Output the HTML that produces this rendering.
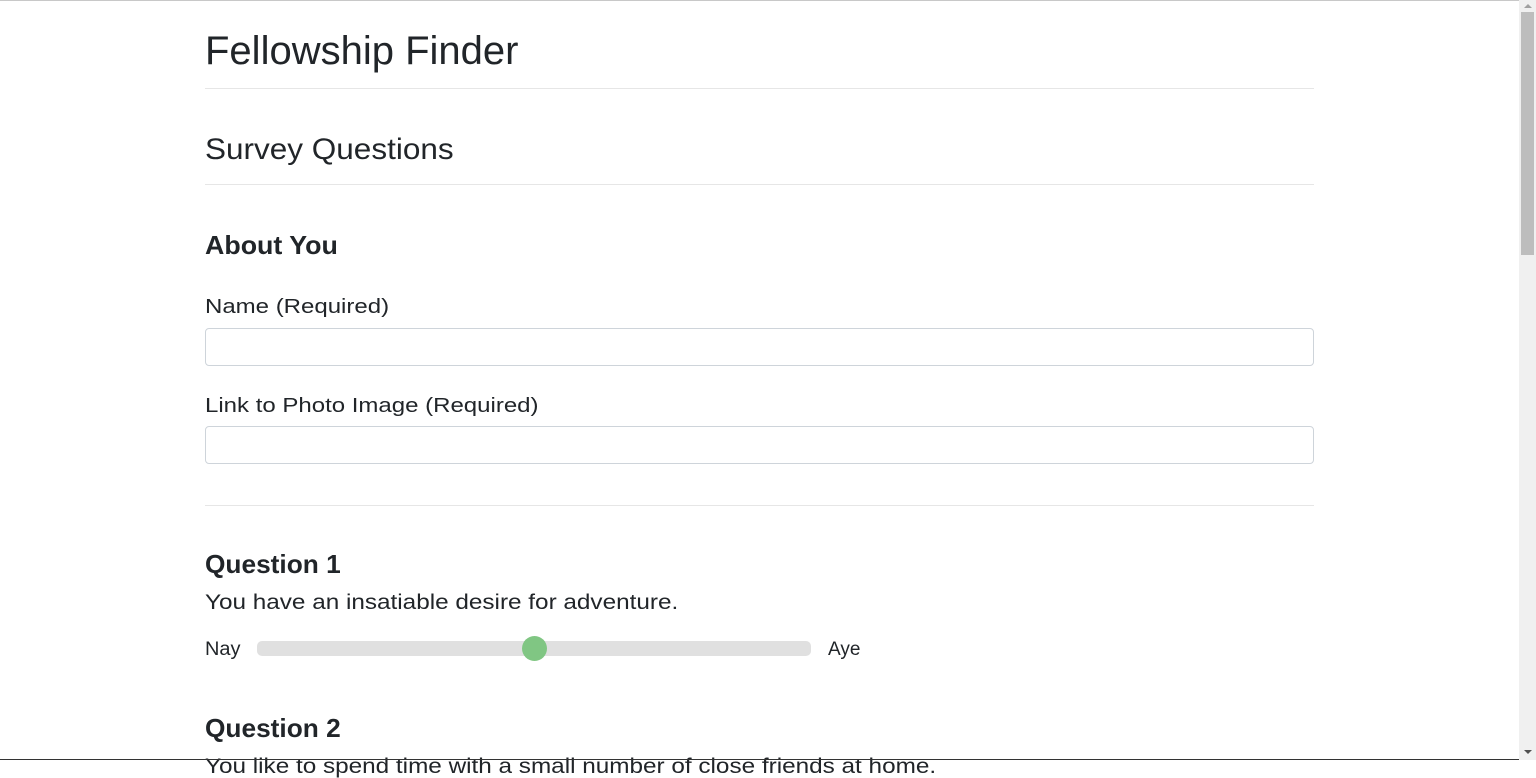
<!DOCTYPE html>
<html><head><meta charset="utf-8"><style>
html,body{margin:0;padding:0;width:1536px;height:760px;overflow:hidden;background:#fff;font-family:"Liberation Sans",sans-serif;color:#212529}
.a{position:absolute;line-height:1;white-space:nowrap;transform-origin:0 0}
.hr{position:absolute;left:205px;width:1109px;height:1px;background:#e6e6e6}
.inp{position:absolute;left:205px;width:1107px;height:36px;border:1px solid #ced4da;border-radius:4px;background:#fff}
</style></head><body>
<div style="position:absolute;left:0;top:0;width:1536px;height:1px;background:#c8c8c8"></div>
<div class="a" style="left:205px;top:31px;font-size:40px">Fellowship Finder</div>
<div class="hr" style="top:88px"></div>
<div class="a" style="left:205px;top:135px;font-size:30px;transform:scaleX(1.05)">Survey Questions</div>
<div class="hr" style="top:184px"></div>
<div class="a" style="left:205px;top:232px;font-size:26px;font-weight:bold;transform:scaleX(1.03)">About You</div>
<div class="a" style="left:205px;top:297px;font-size:20px;transform:scaleX(1.2)">Name (Required)</div>
<div class="inp" style="top:328px"></div>
<div class="a" style="left:205px;top:396px;font-size:20px;transform:scaleX(1.2)">Link to Photo Image (Required)</div>
<div class="inp" style="top:426px"></div>
<div class="hr" style="top:505px"></div>
<div class="a" style="left:205px;top:551px;font-size:26px;font-weight:bold;transform:scaleX(1.01)">Question 1</div>
<div class="a" style="left:205px;top:592px;font-size:21px;transform:scaleX(1.157)">You have an insatiable desire for adventure.</div>
<div class="a" style="left:205px;top:640px;font-size:19px;transform:scaleX(1.05)">Nay</div>
<div style="position:absolute;left:257px;top:641px;width:554px;height:15px;border-radius:5px;background:#e0e0e0"></div>
<div style="position:absolute;left:522px;top:636px;width:25px;height:25px;border-radius:50%;background:#80c683"></div>
<div class="a" style="left:828px;top:640px;font-size:19px">Aye</div>
<div class="a" style="left:205px;top:715px;font-size:26px;font-weight:bold;transform:scaleX(1.01)">Question 2</div>
<div class="a" style="left:205px;top:756px;font-size:21px;transform:scaleX(1.157)">You like to spend time with a small number of close friends at home.</div>
<div style="position:absolute;left:0;top:759px;width:1536px;height:1px;background:#333"></div>
<div style="position:absolute;left:1519px;top:0;width:17px;height:760px;background:#f0f0f0"></div>
<div style="position:absolute;left:1521px;top:12px;width:13px;height:243px;background:#bdbdbd"></div>
<div style="position:absolute;left:1524px;top:4px;width:0;height:0;border-left:4px solid transparent;border-right:4px solid transparent;border-bottom:4px solid #a0a0a0"></div>
<div style="position:absolute;left:1524px;top:750px;width:0;height:0;border-left:4px solid transparent;border-right:4px solid transparent;border-top:4px solid #505050"></div>
</body></html>
